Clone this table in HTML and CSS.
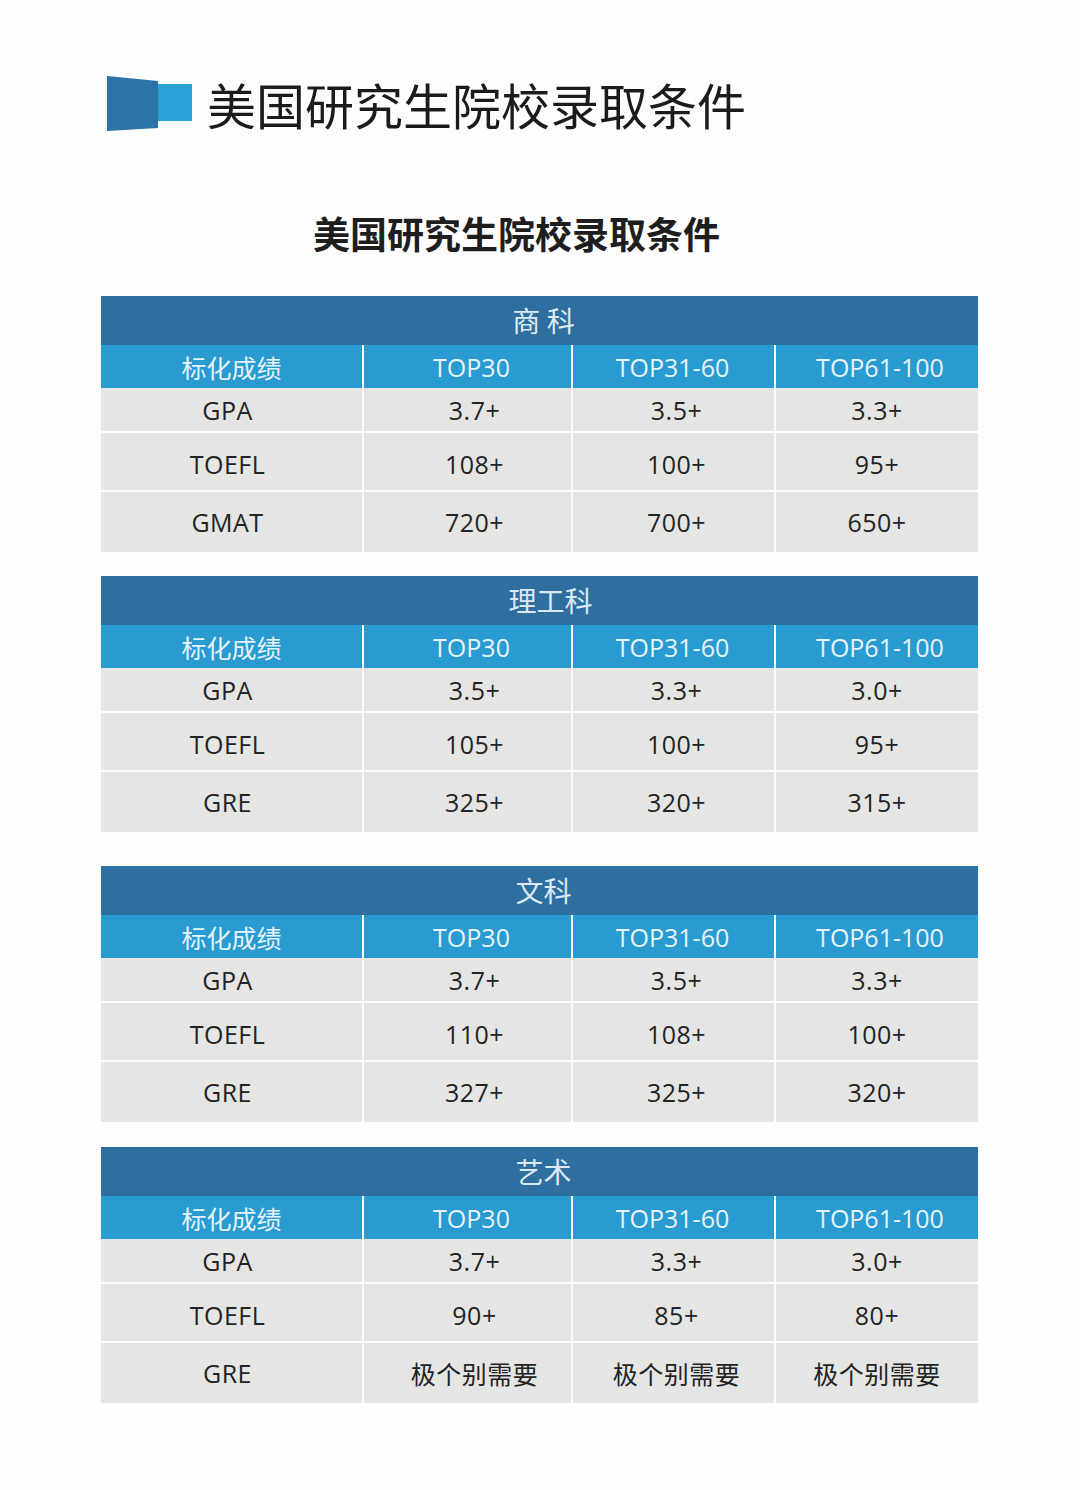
FILE: index.html
```html
<!DOCTYPE html>
<html lang="zh-CN">
<head>
<meta charset="utf-8">
<title>美国研究生院校录取条件</title>
<link rel="stylesheet" href="styles.css">
</head>
<body>
<div class="page">
  <header class="banner">
    <svg class="logo" width="85" height="56" viewBox="0 0 85 56" aria-hidden="true">
      <polygon points="0,0 51,5 51,52 0,55" fill="#2b73a9"/>
      <rect x="51" y="8" width="34" height="37" fill="#2aa1d7"/>
    </svg>
    <h1 class="banner-title">美国研究生院校录取条件</h1>
  </header>

  <h2 class="subtitle">美国研究生院校录取条件</h2>

  <section class="table t1">
    <div class="table-title">商 科</div>
    <div class="row head"><div>标化成绩</div><div>TOP30</div><div>TOP31-60</div><div>TOP61-100</div></div>
    <div class="row r1"><div>GPA</div><div>3.7+</div><div>3.5+</div><div>3.3+</div></div>
    <div class="row r2"><div>TOEFL</div><div>108+</div><div>100+</div><div>95+</div></div>
    <div class="row r3"><div>GMAT</div><div>720+</div><div>700+</div><div>650+</div></div>
  </section>

  <section class="table t2">
    <div class="table-title wide">理工科</div>
    <div class="row head"><div>标化成绩</div><div>TOP30</div><div>TOP31-60</div><div>TOP61-100</div></div>
    <div class="row r1"><div>GPA</div><div>3.5+</div><div>3.3+</div><div>3.0+</div></div>
    <div class="row r2"><div>TOEFL</div><div>105+</div><div>100+</div><div>95+</div></div>
    <div class="row r3"><div>GRE</div><div>325+</div><div>320+</div><div>315+</div></div>
  </section>

  <section class="table t3">
    <div class="table-title">文科</div>
    <div class="row head"><div>标化成绩</div><div>TOP30</div><div>TOP31-60</div><div>TOP61-100</div></div>
    <div class="row r1"><div>GPA</div><div>3.7+</div><div>3.5+</div><div>3.3+</div></div>
    <div class="row r2"><div>TOEFL</div><div>110+</div><div>108+</div><div>100+</div></div>
    <div class="row r3"><div>GRE</div><div>327+</div><div>325+</div><div>320+</div></div>
  </section>

  <section class="table t4">
    <div class="table-title">艺术</div>
    <div class="row head"><div>标化成绩</div><div>TOP30</div><div>TOP31-60</div><div>TOP61-100</div></div>
    <div class="row r1"><div>GPA</div><div>3.7+</div><div>3.3+</div><div>3.0+</div></div>
    <div class="row r2"><div>TOEFL</div><div>90+</div><div>85+</div><div>80+</div></div>
    <div class="row r3"><div>GRE</div><div>极个别需要</div><div>极个别需要</div><div>极个别需要</div></div>
  </section>
</div>
</body>
</html>
```

FILE: styles.css
```css
html, body {
  margin: 0;
  padding: 0;
  background: #fdfdfd;
}

body {
  font-family: "Open Sans", "Noto Sans CJK SC", sans-serif;
  color: #222;
}

.page {
  width: 1080px;
  height: 1490px;
  padding-top: 76px;
  box-sizing: border-box;
}

.banner {
  display: flex;
  align-items: center;
  gap: 15px;
  margin-left: 107px;
  height: 56px;
}

.logo {
  display: block;
  flex: none;
}

.banner-title {
  margin: 0;
  font-family: "Noto Sans CJK SC", sans-serif;
  font-weight: 400;
  font-size: 49px;
  line-height: 56px;
  color: #1b1b1b;
}

.subtitle {
  margin: 76px 0 0 313px;
  font-family: "Noto Sans CJK SC", sans-serif;
  font-weight: 700;
  font-size: 37px;
  line-height: 50px;
  color: #1e1e1e;
}

.table {
  width: 877px;
  margin-left: 101px;
}

.t1 { margin-top: 38px; }
.t2 { margin-top: 24px; }
.t3 { margin-top: 34px; }
.t4 { margin-top: 25px; }

.table-title {
  height: 49px;
  background: #2f6f9f;
  color: #dde9f2;
  font-family: "Noto Sans CJK SC", sans-serif;
  font-size: 28px;
  line-height: 49px;
  text-align: center;
  padding-left: 8px;
}

.table-title.wide {
  padding-left: 22px;
}

.row {
  display: grid;
  grid-template-columns: 261px 207px 201px 202px;
  column-gap: 2px;
  background: #fdfdfd;
}

.row > div {
  display: flex;
  align-items: center;
  justify-content: center;
  font-size: 25px;
  background: #e5e5e4;
  color: #232323;
  letter-spacing: 0.5px;
}

.row > div:nth-child(1) { padding-right: 8px; }
.row > div:nth-child(2) { padding-left: 14px; }
.row > div:nth-child(3) { padding-left: 6px; }

.row.head > div {
  background: #2a9bd0;
  color: #e6f3fa;
  letter-spacing: 0;
}

.row.head > div:nth-child(1) { padding-right: 0; }
.row.head > div:nth-child(2) { padding-left: 8px; }
.row.head > div:nth-child(3) { padding-left: 0; padding-right: 2px; }
.row.head > div:nth-child(4) { padding-left: 6px; }

.row.head { height: 43px; }
.row.r1 { height: 43px; }
.row.r2 { height: 57px; margin-top: 2px; }
.row.r2 > div { padding-top: 4px; }
.row.r3 { height: 60px; margin-top: 2px; }
```
